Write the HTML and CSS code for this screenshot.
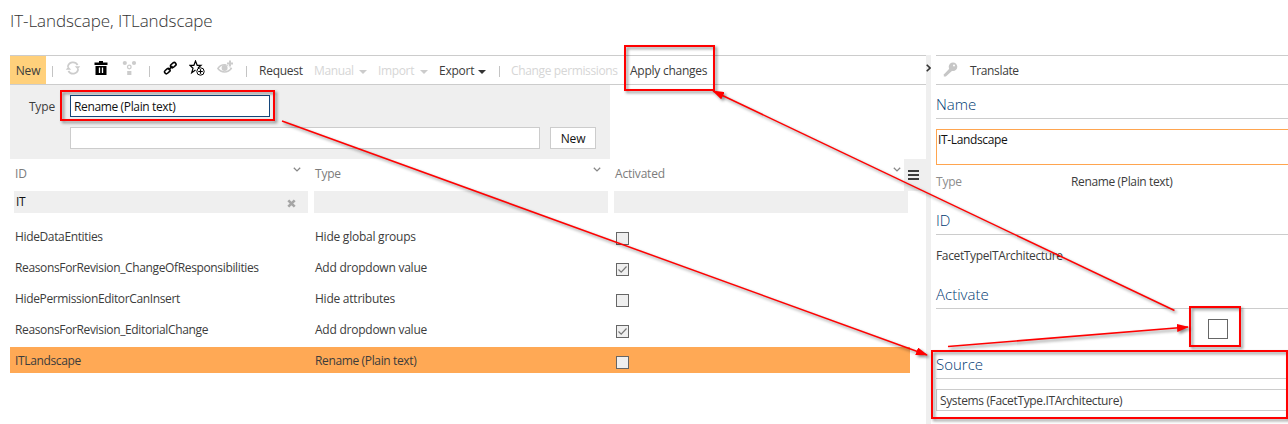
FILE: index.html
```html
<!DOCTYPE html>
<html lang="en">
<head>
<meta charset="utf-8">
<title>IT-Landscape</title>
<link rel="stylesheet" href="styles.css">
</head>
<body>
<div class="page">
  <h1 class="title">IT-Landscape, ITLandscape</h1>
  <div class="panes">
    <main class="main">
      <div class="toolbar">
        <button class="tool-new">New</button>
        <i class="sep"></i>
        <svg class="icon muted" viewBox="0 0 16 16"><path d="M2.800 6.800A5.300 5.300 0 0 1 12.600 5M13.200 9.200A5.300 5.300 0 0 1 3.400 11" fill="none" stroke="currentColor" stroke-width="1.800"/><path d="M9.800 6.200h5.400l-2.400 3.300zM6.200 9.800H.8l2.400-3.300z" fill="currentColor"/></svg>
        <svg class="icon" viewBox="0 0 16 16"><path d="M6 1h4v1.500h4.500V5h-13V2.500H6zM2.500 6h11v9h-11z" fill="#000"/><path d="M6.500 7.500V13M9.500 7.500V13" stroke="#fff" stroke-width="1.300"/></svg>
        <svg class="icon muted" viewBox="0 0 16 16"><g fill="currentColor"><circle cx="3.800" cy="3" r="2.100"/><circle cx="13" cy="3" r="2.100"/><path d="M6.200 11h4.200v4H6.200z"/></g><circle cx="8.300" cy="7" r="1.800" fill="none" stroke="currentColor" stroke-width="1.300"/></svg>
        <i class="sep sep-b"></i>
        <svg class="icon" viewBox="0 0 16 16"><g fill="none" stroke="#000" stroke-width="1.600"><rect x="1.300" y="9.300" width="6" height="3.600" rx="1.800" transform="rotate(-40 4.300 11.100)"/><rect x="7.300" y="3.300" width="6" height="3.600" rx="1.800" transform="rotate(-40 10.300 5.100)"/><path d="M5.500 10l4-3.800"/></g></svg>
        <svg class="icon" viewBox="0 0 16 16"><path d="M9 8 12 5.300H8.200L6.500 1 4.900 5.300H.9L4 8.300l-1.300 4.500L6.500 10" fill="none" stroke="#000" stroke-width="1.200"/><circle cx="11.500" cy="11.500" r="3.700" fill="#fff" stroke="#000"/><path d="M11.500 9.200v4.600M9.200 11.500h4.600" stroke="#000" stroke-width="1.200"/></svg>
        <svg class="icon muted" viewBox="0 0 16 16"><path d="M.9 8.500C4 3.500 11 3.500 14.300 8.500 11 13 4 13 .9 8.500z" fill="none" stroke="currentColor" stroke-width="1.500"/><circle cx="7.600" cy="8" r="3" fill="currentColor"/><path d="M13 .5v7M9.500 3.500h6.500" stroke="#fff" stroke-width="3.500"/><path d="M13 .5v6M10 3.500h6" stroke="currentColor" stroke-width="2"/></svg>
        <i class="sep sep-c"></i>
        <span>Request</span>
        <span class="off">Manual</span><i class="caret off"></i>
        <span class="off">Import</span><i class="caret off"></i>
        <span>Export</span><i class="caret"></i>
        <i class="sep sep-d"></i>
        <span class="off">Change permissions</span>
        <span>Apply changes</span>
      </div>
      <form class="filter">
        <label class="filter-label">Type</label>
        <div class="field field-type">Rename (Plain text)</div>
        <div class="field field-name"></div>
        <button type="button" class="field field-new">New</button>
      </form>
      <div class="head">
        <div class="col">ID<svg class="chev" viewBox="0 0 8 5"><path d="M.8.700 4 3.900 7.200.7"/></svg></div>
        <div class="col">Type<svg class="chev" viewBox="0 0 8 5"><path d="M.8.700 4 3.900 7.200.7"/></svg></div>
        <div class="col">Activated<svg class="chev" viewBox="0 0 8 5"><path d="M.8.700 4 3.900 7.200.7"/></svg></div>
        <div class="menu"><i></i><i></i><i></i></div>
      </div>
      <div class="search">
        <div class="cell">IT<svg class="clear" viewBox="0 0 9 9"><path d="M1.300 1.300l6.400 6.400M7.700 1.300 1.300 7.700"/></svg></div>
        <div class="cell"></div>
        <div class="cell"></div>
      </div>
      <div class="rows">
        <div class="row"><span>HideDataEntities</span><span>Hide global groups</span><i class="check"></i></div>
        <div class="row"><span>ReasonsForRevision_ChangeOfResponsibilities</span><span>Add dropdown value</span><i class="check"><svg viewBox="0 0 11 11"><path d="M1.500 5.500 4.200 8.200 9.500 2.500"/></svg></i></div>
        <div class="row"><span>HidePermissionEditorCanInsert</span><span>Hide attributes</span><i class="check"></i></div>
        <div class="row"><span>ReasonsForRevision_EditorialChange</span><span>Add dropdown value</span><i class="check"><svg viewBox="0 0 11 11"><path d="M1.500 5.500 4.200 8.200 9.500 2.500"/></svg></i></div>
        <div class="row selected"><span>ITLandscape</span><span class="rename">Rename (Plain text)</span><i class="check"></i></div>
      </div>
    </main>
    <div class="splitter"><svg viewBox="0 0 5 8"><path d="M.7.700 4 4 .7 7.300"/></svg></div>
    <aside class="side">
      <div class="side-bar">
        <svg class="key" viewBox="0 0 15 15"><circle cx="10" cy="4.800" r="4.300" fill="#c6c6c6"/><path d="M7 6 .8 12.500v2h2L9.500 8.500z" fill="#c6c6c6"/><circle cx="11" cy="3.400" r="1" fill="#fff"/></svg>
        <span>Translate</span>
      </div>
      <h2 class="h-name">Name</h2>
      <div class="name-box">IT-Landscape</div>
      <div class="type-row"><span>Type</span><span>Rename (Plain text)</span></div>
      <h2>ID</h2>
      <p class="id-value">FacetTypeITArchitecture</p>
      <h2>Activate</h2>
      <div class="act-row"><i class="big-check"></i></div>
      <h2>Source</h2>
      <div class="source-box">Systems (FacetType.ITArchitecture)</div>
    </aside>
  </div>
  <svg class="notes" viewBox="0 0 1288 424">
    <defs>
      <marker id="tip" markerUnits="userSpaceOnUse" markerWidth="12" markerHeight="8" refX="11" refY="4" orient="auto"><path d="M0 0 12 4 0 8z" fill="#f00"/></marker>
    </defs>
    <g fill="none" stroke="#f00" stroke-width="2">
      <g class="shade"><rect x="61" y="91" width="213" height="29"/></g>
      <g class="shade"><rect x="625" y="46" width="89" height="44"/></g>
      <g class="shade"><rect x="1190" y="307" width="50" height="39"/></g>
      <g class="shade"><rect x="932" y="351" width="355" height="67"/></g>
    </g>
    <g class="shade" fill="none" stroke="#f00" stroke-width="1.500">
      <path d="M282 121 927 355" marker-end="url(#tip)"/>
      <path d="M1174.500 310.500 713 91" marker-end="url(#tip)"/>
      <path d="M948 346.500 1188 327" marker-end="url(#tip)"/>
    </g>
  </svg>
</div>
</body>
</html>
```
FILE: styles.css
```css
* { box-sizing: border-box; }
body { margin: 0; background: #fff; color: #3c3c3c; font: 12px/16px "Open Sans", "Noto Sans", sans-serif; letter-spacing: -0.36px; }
.page { position: relative; width: 1288px; height: 424px; overflow: hidden; }
.title { margin: 0; padding: 9px 0 0 10px; height: 55px; font-size: 17px; line-height: 24px; font-weight: 300; color: #333; letter-spacing: -0.08px; }
.panes { display: grid; grid-template-columns: 916px 5px 352px; padding-left: 10px; height: 369px; }
.toolbar { display: grid; grid-template-columns: 36px 18px 28px 28px 26px 16px 26px 28px 26px 17px 55px 44px 20px 41px 20px 38px 20px 14px 119px 90px; align-items: center; height: 30px; border-top: 1px solid #ccc; border-bottom: 1px solid #ccc; white-space: nowrap; letter-spacing: -0.25px; }
.toolbar > span { padding-top: 2px; }
.toolbar .off { letter-spacing: -0.36px; }
.tool-new { width: 36px; height: 28px; padding: 2px 0 0; border: 0; background: #ffd07b; color: #3c3c3c; font: inherit; letter-spacing: -0.15px; }
.sep { width: 1px; height: 11px; margin: 2px 0 0 6px; background: #c4c4c4; }
.sep-b { margin-left: 3px; }
.sep-c { margin-left: 4px; }
.sep-d { margin-left: 2px; }
.icon { width: 16px; height: 16px; margin: -4px 0 0 1px; }
.muted { color: #ccc; }
.off { color: #d6d6d6; }
.caret { width: 0; height: 0; margin: 3px 0 0 1px; border: 4px solid transparent; border-top: 4px solid #333; border-bottom: 0; }
.caret.off { border-top-color: #ccc; }
.filter { display: grid; grid-template-columns: 45px 200px 270px 46px; grid-template-rows: 22px 22px; row-gap: 10px; width: 600px; height: 74px; padding-top: 10px; background: #efefef; }
.filter-label { align-self: center; text-align: right; padding-top: 2px; letter-spacing: -0.15px; }
.field { border: 1px solid #ccc; background: #fff; padding: 3px 3px 1px; color: #111; font: inherit; letter-spacing: inherit; }
.field-type { grid-column: 2; margin: 0 -15px 0 15px; border-color: #14457a; }
.field-name { grid-column: 2 / 4; grid-row: 2; margin: 0 -15px 0 15px; }
.field-new { grid-column: 4; grid-row: 2; margin-left: 25px; width: 46px; padding: 1px 0 0; text-align: center; letter-spacing: -0.15px; }
.head { display: grid; grid-template-columns: 300px 300px 294px 22px; height: 32px; color: #7c7c7c; letter-spacing: -0.2px; }
.col { display: flex; justify-content: space-between; padding: 7px 9px 0 5px; }
.col:nth-child(3) { padding-right: 3px; }
.chev { width: 8px; height: 5px; margin-top: 1px; fill: none; stroke: #888; stroke-width: 1.300; }
.menu { display: grid; align-content: center; justify-content: center; gap: 2px; padding-right: 3px; background: #efefef; }
.menu i { width: 11px; height: 2px; background: #3c3c3c; }
.search { display: grid; grid-template-columns: repeat(3, 294px); column-gap: 6px; padding-left: 4px; }
.cell { display: flex; justify-content: space-between; align-items: center; height: 22px; padding: 0 12px 0 2px; background: #efefef; color: #111; }
.clear { width: 9px; height: 9px; margin-top: 2px; fill: none; stroke: #a5a5a5; stroke-width: 2.600; }
.rows { display: grid; row-gap: 5px; padding-top: 10px; }
.row { display: grid; grid-template-columns: 300px 301px 13px; align-items: center; width: 900px; height: 26px; padding-left: 5px; }
.row span { padding-top: 2px; }
.row span:nth-child(2) { letter-spacing: -0.24px; }
.row .rename:nth-child(2) { letter-spacing: -0.36px; }
.selected { background: #ffa955; }
.check { width: 13px; height: 13px; margin-top: 5px; border: 1px solid #666; background: #efefef; }
.check svg { display: block; width: 11px; height: 11px; fill: none; stroke: #777; stroke-width: 1.200; }
.splitter { background: #efefef; }
.splitter svg { display: block; width: 5px; height: 8px; margin-top: 9px; fill: none; stroke: #333; stroke-width: 1.600; }
.side { padding-left: 5px; width: 357px; }
.side-bar { display: flex; gap: 12px; height: 30px; padding: 6px 0 0 7px; border: solid #ccc; border-width: 1px 0; }
.side-bar span { padding-top: 1px; }
.key { width: 15px; height: 15px; }
.side h2 { margin: 0; height: 26px; padding-top: 1px; border-bottom: 1px solid #ccc; color: #003a72; font-size: 15px; line-height: 20px; font-weight: 300; letter-spacing: 0; }
.side .h-name { height: 34px; padding-top: 9px; }
.name-box { height: 36px; margin-top: 10px; padding: 2px 1px; border: 1px solid #ffa54f; border-right: 0; color: #111; }
.type-row { display: grid; grid-template-columns: 135px 1fr; padding-top: 9px; height: 44px; }
.type-row span:first-child { color: #8c8c8c; letter-spacing: -0.2px; }
.id-value { margin: 0; padding-top: 13px; height: 48px; }
.act-row { display: flex; height: 44px; padding: 10px 0 0 272px; }
.big-check { width: 20px; height: 20px; border: 1px solid #666; }
.source-box { height: 22px; margin-top: 10px; padding: 3px; border: 1px solid #ccc; border-right: 0; }
.notes { position: absolute; left: 0; top: 0; width: 1288px; height: 424px; }
.shade { filter: drop-shadow(2px 2px 1.500px rgba(0, 0, 0, .45)); }
```
